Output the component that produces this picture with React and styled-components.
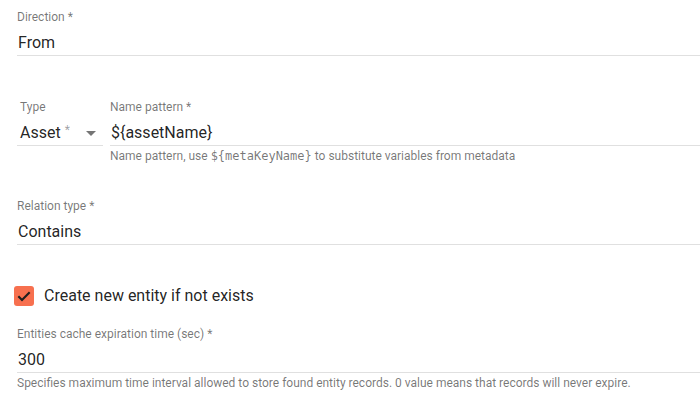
import React from "react";
import styled, { createGlobalStyle } from "styled-components";

const Global = createGlobalStyle`
  html, body { margin: 0; padding: 0; background: #fff; }
  body { font-family: Roboto, "Noto Sans", Arial, sans-serif; }
  * { box-sizing: border-box; }
`;

const Page = styled.div`
  width: 700px;
  height: 400px;
  overflow: hidden;
  padding: 10px 0 0 17px;
  display: flex;
  flex-direction: column;
  align-items: stretch;
`;

const Row = styled.div`
  display: flex;
  gap: 7px;
  flex: none;
  margin-top: ${(p) => p.$mt || 0}px;
`;

const Field = styled.div`
  display: flex;
  flex-direction: column;
  margin-top: ${(p) => p.$mt || 0}px;
  width: ${(p) => (p.$w ? `${p.$w}px` : "auto")};
  flex: ${(p) => (p.$grow ? "1 1 0" : "none")};
`;

const Label = styled.div`
  font-size: 12px;
  line-height: 14px;
  color: rgba(0, 0, 0, 0.54);
  white-space: nowrap;
  padding-left: ${(p) => p.$pl || 0}px;
`;

const Value = styled.div`
  display: flex;
  align-items: center;
  font-size: 16px;
  line-height: 20px;
  color: rgba(0, 0, 0, 0.87);
  padding: 0 0 2px ${(p) => (p.$pl != null ? p.$pl : 1)}px;
  margin-top: 9px;
  border-bottom: 1px solid rgba(0, 0, 0, 0.12);
  white-space: nowrap;
`;

const Req = styled.span`
  color: rgba(0, 0, 0, 0.38);
  font-size: 12px;
  margin-left: 4px;
  align-self: flex-start;
  line-height: 14px;
`;

const Arrow = styled.span`
  margin-left: auto;
  margin-right: 7px;
  width: 0;
  height: 0;
  border-left: 5px solid transparent;
  border-right: 5px solid transparent;
  border-top: 5px solid rgba(0, 0, 0, 0.54);
`;

const Hint = styled.div`
  font-size: 12px;
  line-height: 14px;
  color: rgba(0, 0, 0, 0.54);
  margin-top: 3px;
  white-space: nowrap;
`;

const Code = styled.code`
  font-family: "DejaVu Sans Mono", "Liberation Mono", monospace;
  font-size: 12px;
`;

const CheckRow = styled.label`
  display: flex;
  flex: none;
  align-items: center;
  gap: 10px;
  margin-top: ${(p) => p.$mt || 0}px;
  margin-left: -3px;
  font-size: 16px;
  line-height: 20px;
  color: rgba(0, 0, 0, 0.87);
`;

const Box = styled.span`
  width: 20px;
  height: 20px;
  border-radius: 3px;
  background: #f7704f;
  display: flex;
  align-items: center;
  justify-content: center;
`;

export default function App() {
  return (
    <>
      <Global />
      <Page>
        <Field>
          <Label>Direction *</Label>
          <Value>From</Value>
        </Field>

        <Row $mt={44}>
          <Field $w={86}>
            <Label $pl={3}>Type</Label>
            <Value $pl={3}>
              Asset<Req>*</Req>
              <Arrow />
            </Value>
          </Field>
          <Field $grow>
            <Label>Name pattern *</Label>
            <Value>{"${assetName}"}</Value>
            <Hint>
              Name pattern, use <Code>{"${metaKeyName}"}</Code> to substitute variables from metadata
            </Hint>
          </Field>
        </Row>

        <Field $mt={36}>
          <Label>Relation type *</Label>
          <Value>Contains</Value>
        </Field>

        <CheckRow $mt={41}>
          <Box>
            <svg width="16" height="16" viewBox="0 0 24 24">
              <path d="M3.5 12.5l5.5 5.5L20.5 6.5" fill="none" stroke="#1f1f1f" strokeWidth="3.2" />
            </svg>
          </Box>
          Create new entity if not exists
        </CheckRow>

        <Field $mt={21}>
          <Label>Entities cache expiration time (sec) *</Label>
          <Value>300</Value>
          <Hint>
            Specifies maximum time interval allowed to store found entity records. 0 value means that records will never expire.
          </Hint>
        </Field>
      </Page>
    </>
  );
}
